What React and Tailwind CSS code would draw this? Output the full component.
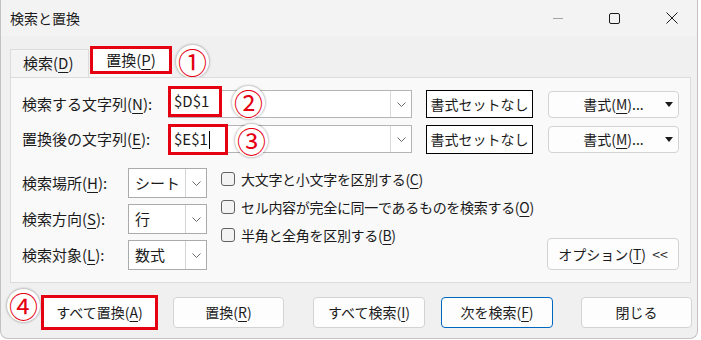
import React from 'react';

const RED = 'border-[#e50012]';

function Mn({ children }) {
  return <span className="underline decoration-1 underline-offset-[3px]">{children}</span>;
}

function Badge({ n, className = '' }) {
  return (
    <div
      className={`flex h-[33px] w-[33px] shrink-0 items-center justify-center rounded-full bg-white text-[29px] leading-none text-[#e50012] shadow-[0_0_2px_1px_rgba(0,0,0,0.22)] ${className}`}
    >
      {n}
    </div>
  );
}

function Chevron() {
  return (
    <svg width="9" height="5" viewBox="0 0 9 5" fill="none">
      <path d="M0.5 0.5 L4.5 4.5 L8.5 0.5" stroke="#6b6b6b" strokeWidth="1" />
    </svg>
  );
}

function Select({ value }) {
  return (
    <div className="flex h-[30px] w-[79px] border border-[#ababab] bg-white">
      <div className="flex flex-1 items-center pl-[6px] text-[15px]">{value}</div>
      <div className="flex w-[21px] items-center justify-center border-l border-[#d4d4d4]">
        <Chevron />
      </div>
    </div>
  );
}

function Check({ children }) {
  return (
    <div className="flex h-[28px] items-center gap-[6px]">
      <div className="h-[14px] w-[14px] rounded-[3px] border border-[#616161] bg-[#f3f3f3]" />
      <span className="tracking-[-0.3px]">{children}</span>
    </div>
  );
}

function Btn({ children, className = '' }) {
  return (
    <div
      className={`flex h-[31px] w-[111px] items-center justify-center rounded-[4px] border bg-[#fdfdfd] ${className}`}
    >
      {children}
    </div>
  );
}

function FormatBtn() {
  return (
    <div className="relative ml-[15px] flex h-[27px] w-[131px] items-center justify-center rounded-[4px] border border-[#d3d3d3] bg-[#fdfdfd]">
      <span>
        書式(<Mn>M</Mn>)...
      </span>
      <svg className="absolute right-[5px] top-[10px]" width="8" height="5" viewBox="0 0 8 5">
        <path d="M0 0 H8 L4 5 Z" fill="#1b1b1b" />
      </svg>
    </div>
  );
}

export default function App() {
  return (
    <div className="h-[340px] w-[701px] bg-white font-['Noto_Sans_CJK_JP','Noto_Sans',sans-serif] text-[14px] text-[#1b1b1b]">
      <div className="flex h-[339px] w-[698px] flex-col overflow-hidden rounded-b-[8px] border-x border-b border-[#c2c2c2] bg-[#f0f0f0]">
        {/* title bar */}
        <div className="flex h-[36px] shrink-0 items-center bg-[#f3f3f3] pl-[9px]">
          <span>検索と置換</span>
          <div className="ml-auto mr-[19px] flex items-center gap-[46px]">
            <div className="h-px w-[10px] bg-[#a3a3a3]" />
            <div className="h-[11px] w-[11px] rounded-[2px] border border-[#1b1b1b]" />
            <svg width="12" height="12" viewBox="0 0 12 12">
              <path d="M0.5 0.5 L11.5 11.5 M11.5 0.5 L0.5 11.5" stroke="#1b1b1b" strokeWidth="1" />
            </svg>
          </div>
        </div>

        <div className="flex flex-col pl-[9px]">
          {/* tabs */}
          <div className="mt-[8px] flex h-[33px] items-end text-[15px]">
            <div className="flex h-[28px] w-[79px] items-center border border-b-0 border-[#dcdcdc] bg-[#f4f4f4] pl-[12px]">
              検索(<Mn>D</Mn>)
            </div>
            <div className="ml-[1px] h-[31px] w-[82px] bg-[#f9f9f9]">
              <div className={`flex h-[28px] items-center justify-center border-[3px] ${RED} bg-white`}>
                置換(<Mn>P</Mn>)
              </div>
            </div>
            <Badge n="①" className="ml-[4px] mt-[1px] self-start" />
          </div>

          {/* tab panel */}
          <div className="flex h-[206px] w-[681px] flex-col border border-[#dcdcdc] bg-[#f9f9f9] px-[11px]">
            <div className="mt-[10px] flex h-[32px] items-center">
              <div className="w-[146px] text-[15px]">
                検索する文字列(<Mn>N</Mn>):
              </div>
              <div className="relative flex h-[28px] w-[244px] border border-[#b4b4b4] bg-white">
                <div className="flex-1" />
                <div className="flex w-[21px] items-center justify-center border-l border-[#dadada]">
                  <Chevron />
                </div>
                <div className={`absolute left-[-1px] top-[-5px] flex h-[31px] w-[54px] items-center border-[3px] ${RED} bg-white pl-[3px] text-[15px]`}>
                  $D$1
                </div>
                <Badge n="②" className="absolute left-[63px] top-[-5px]" />
              </div>
              <div className="ml-[14px] flex h-[28px] w-[107px] items-center justify-center border border-black bg-white">
                書式セットなし
              </div>
              <FormatBtn />
            </div>

            <div className="mt-[3px] flex h-[32px] items-center">
              <div className="w-[146px] text-[15px]">
                置換後の文字列(<Mn>E</Mn>):
              </div>
              <div className="relative flex h-[28px] w-[244px] border border-[#b4b4b4] bg-white">
                <div className="flex-1" />
                <div className="flex w-[21px] items-center justify-center border-l border-[#dadada]">
                  <Chevron />
                </div>
                <div className={`absolute left-[-1px] top-[-2px] flex h-[31px] w-[60px] items-center border-[3px] ${RED} bg-white pl-[3px] text-[15px]`}>
                  $E$1
                  <span className="ml-[1px] h-[18px] w-px bg-black" />
                </div>
                <Badge n="③" className="absolute left-[66px] top-[-2px]" />
              </div>
              <div className="ml-[14px] flex h-[29px] w-[107px] items-center justify-center border border-black bg-white">
                書式セットなし
              </div>
              <FormatBtn />
            </div>

            <div className="mt-[10px] flex">
              <div className="flex flex-col gap-[6px] pt-[3px] text-[15px]">
                <div className="flex h-[30px] items-center">
                  <div className="w-[106px]">
                    検索場所(<Mn>H</Mn>):
                  </div>
                  <Select value="シート" />
                </div>
                <div className="flex h-[30px] items-center">
                  <div className="w-[106px]">
                    検索方向(<Mn>S</Mn>):
                  </div>
                  <Select value="行" />
                </div>
                <div className="flex h-[30px] items-center">
                  <div className="w-[106px]">
                    検索対象(<Mn>L</Mn>):
                  </div>
                  <Select value="数式" />
                </div>
              </div>
              <div className="ml-[14px] flex flex-col">
                <Check>
                  大文字と小文字を区別する(<Mn>C</Mn>)
                </Check>
                <Check>
                  セル内容が完全に同一であるものを検索する(<Mn>O</Mn>)
                </Check>
                <Check>
                  半角と全角を区別する(<Mn>B</Mn>)
                </Check>
              </div>
              <div className="ml-auto mt-[73px] flex h-[32px] w-[132px] items-center justify-center rounded-[4px] border border-[#d3d3d3] bg-[#fdfdfd]">
                オプション(<Mn>T</Mn>)&nbsp;&nbsp;&lt;&lt;
              </div>
            </div>
          </div>

          {/* bottom buttons */}
          <div className="-ml-[3px] mt-[6px] flex items-start">
            <Badge n="④" />
            <div className={`ml-[1px] mt-[6px] flex h-[35px] w-[117px] items-center justify-center border-[3px] ${RED} bg-white`}>
              すべて置換(<Mn>A</Mn>)
            </div>
            <Btn className="ml-[15px] mt-[8px] border-[#d3d3d3]">
              置換(<Mn>R</Mn>)
            </Btn>
            <Btn className="ml-[29px] mt-[8px] w-[112px] border-[#d3d3d3]">
              すべて検索(<Mn>I</Mn>)
            </Btn>
            <Btn className="ml-[16px] mt-[8px] w-[112px] border-[#0067c0]">
              次を検索(<Mn>F</Mn>)
            </Btn>
            <Btn className="ml-[28px] mt-[8px] border-[#d3d3d3]">閉じる</Btn>
          </div>
        </div>
      </div>
    </div>
  );
}
